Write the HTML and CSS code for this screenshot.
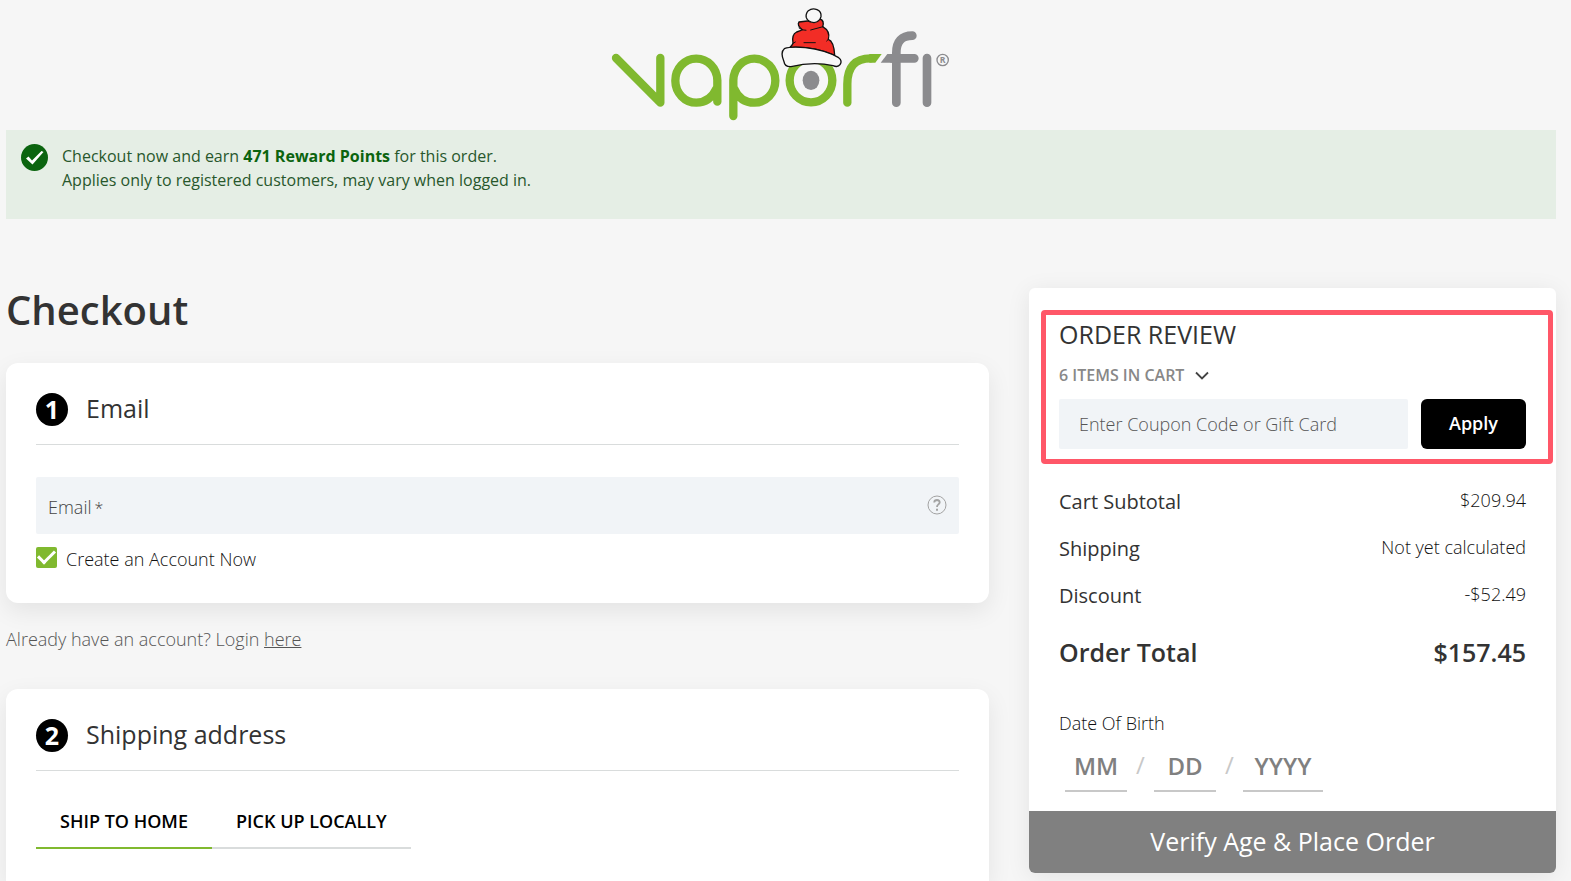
FILE: index.html
```html
<!DOCTYPE html>
<html lang="en">
<head>
<meta charset="utf-8">
<title>Checkout</title>
<meta name="viewport" content="width=device-width, initial-scale=1">
<link rel="stylesheet" href="styles.css">
</head>
<body>
<header class="site-header">
  <a href="#" class="logo" aria-label="VaporFi">
    <svg width="360" height="130" viewBox="0 0 1080 390" fill="none" stroke-linecap="round" stroke-linejoin="round">
      <g stroke="#80b92f" stroke-width="25">
        <path d="M48 174 181 308V174"/>
        <path d="M352 305V241A63 66 0 1 0 289 308Q330 308 350 265"/>
        <path d="M400 348V241A63 66 0 1 1 463 308Q420 308 402 265"/>
        <ellipse cx="633" cy="241" rx="64" ry="66"/>
        <path d="M742 308V252Q742 175 812 175"/>
      </g>
      <path fill="#80b92f" d="M808 162H845L826 188H808Z"/>
      <ellipse cx="633" cy="241" rx="25" ry="29" fill="#8b8b8e"/>
      <g stroke="#8b8b8e" stroke-width="26">
        <path d="M889 308V158Q889 107 937 107"/>
        <path d="M876 175H943M981 174V308"/>
      </g>
      <path fill="#8b8b8e" d="M862 162H890V188H842Z"/>
      <ellipse cx="1028" cy="180" rx="17" ry="17" stroke="#8b8b8e" stroke-width="4"/>
      <text x="1028" y="189" text-anchor="middle" class="logo-mark">R</text>
      <g stroke="#111" stroke-width="4">
        <path fill="#f22d26" d="M570 142Q576 136 579 130Q574 104 590 96Q600 93 607 89Q590 76 597 66L622 63Q640 70 660 57Q674 62 668 80Q692 94 685 118Q702 124 704 166Q640 138 570 142Z"/>
        <path d="M597 84Q608 92 618 91M632 90 669 80M612 128H646M685 118 680 123M579 130 586 126" stroke-width="3"/>
        <path fill="#f7f7f7" d="M553 146Q572 139 616 143Q676 150 716 173Q728 182 720 194Q714 203 699 197Q640 183 573 200Q554 201 552 185Q540 157 553 146Z"/>
        <path fill="#f7f7f7" d="M625 32Q637 23 651 29Q665 35 663 50Q659 66 642 68Q623 66 619 53Q616 42 625 32Z"/>
      </g>
    </svg>
  </a>
</header>

<section class="notice" role="status">
  <svg class="notice-icon" viewBox="0 0 27 27" width="27" height="27"><circle cx="13.5" cy="13.5" r="13.5" fill="#0b640f"/><path d="M5 14.500 7.500 12.500 11 16.500 20.500 7 22.500 8 11.500 20.500Z" fill="#fff"/></svg>
  <p class="notice-text">Checkout now and earn <strong>471 Reward Points</strong> for this order.<br>Applies only to registered customers, may vary when logged in.</p>
</section>

<main class="checkout">
  <div class="steps">
    <h1 class="page-title">Checkout</h1>
    <section class="card">
      <h2 class="step-title"><span class="step-number">1</span>Email</h2>
      <div class="field">
        <label for="email" class="field-label">Email<span class="required">*</span></label>
        <input id="email" type="email" class="field-input">
        <button type="button" class="help" aria-label="Help">
          <svg viewBox="0 0 20 20" width="20" height="20" fill="none" stroke="#a3a3a3"><circle cx="10" cy="10" r="9"/><path d="M7.200 7.500Q7.400 5 10 5Q12.700 5.100 12.700 7.400Q12.600 8.700 11.200 9.600Q10 10.500 10 12" stroke-width="1.800"/><path d="M10 13.700V15.700" stroke-width="2"/></svg>
        </button>
      </div>
      <div class="check-row">
        <input type="checkbox" id="create" class="check" checked>
        <label for="create">Create an Account Now</label>
      </div>
    </section>
    <p class="login">Already have an account? Login <a href="#">here</a></p>
    <section class="card card-shipping">
      <h2 class="step-title"><span class="step-number">2</span>Shipping address</h2>
      <div class="tabs" role="tablist">
        <button type="button" role="tab" aria-selected="true" class="tab tab-active">SHIP TO HOME</button>
        <button type="button" role="tab" aria-selected="false" class="tab">PICK UP LOCALLY</button>
      </div>
    </section>
  </div>

  <aside class="summary">
    <div class="highlight">
      <h2 class="summary-title">ORDER REVIEW</h2>
      <button type="button" class="cart-toggle">6 ITEMS IN CART
        <svg viewBox="0 0 14 9" width="14" height="9" fill="none" stroke="#444" stroke-width="1.800"><path d="M1 1.500 7 7.500 13 1.500"/></svg>
      </button>
      <form class="coupon">
        <input type="text" class="coupon-input" aria-label="Coupon code or gift card" placeholder="Enter Coupon Code or Gift Card">
        <button type="button" class="apply">Apply</button>
      </form>
    </div>
    <dl class="totals">
      <div class="row"><dt>Cart Subtotal</dt><dd>$209.94</dd></div>
      <div class="row"><dt>Shipping</dt><dd>Not yet calculated</dd></div>
      <div class="row"><dt>Discount</dt><dd>-$52.49</dd></div>
      <div class="row row-total"><dt>Order Total</dt><dd>$157.45</dd></div>
    </dl>
    <fieldset class="dob">
      <legend>Date Of Birth</legend>
      <div class="dob-fields">
        <input type="text" class="dob-input" aria-label="Month" placeholder="MM"><span class="slash">/</span>
        <input type="text" class="dob-input" aria-label="Day" placeholder="DD"><span class="slash">/</span>
        <input type="text" class="dob-input dob-year" aria-label="Year" placeholder="YYYY">
      </div>
    </fieldset>
    <button type="submit" class="place-order">Verify Age &amp; Place Order</button>
  </aside>
</main>
</body>
</html>
```
FILE: styles.css
```css
* { box-sizing: border-box; }

body {
  margin: 0;
  padding: 0 15px 0 6px;
  min-height: 100vh;
  background: #f6f6f6;
  color: #333;
  font-family: "Open Sans", "Noto Sans", sans-serif;
  font-size: 18px;
  line-height: 24px;
}

h1, h2, p, dl, dd, fieldset { margin: 0; padding: 0; border: 0; }
button, input { font: inherit; color: inherit; border: 0; margin: 0; padding: 0; background: none; }
button { cursor: pointer; }
svg { display: block; }

.site-header { display: flex; justify-content: center; padding-right: 2px; }
.logo-mark { fill: #8b8b8e; font-size: 26px; font-weight: 700; }

.notice {
  display: flex;
  gap: 14px;
  padding: 14px 15px;
  min-height: 89px;
  background: #e5eee5;
  font-size: 16px;
}
.notice-text { color: #28572c; }
.notice-text strong { color: #0b640f; }

.checkout {
  display: grid;
  grid-template-columns: 983fr 527fr;
  gap: 40px;
  align-items: start;
  padding-top: 69px;
}

.page-title { font-size: 40px; line-height: 44px; font-weight: 600; margin-bottom: 31px; }

.card {
  padding: 30px 30px 32px;
  border-radius: 12px;
  background: #fff;
  box-shadow: 0 8px 24px rgba(0, 0, 0, 0.08);
}

.step-title {
  display: flex;
  align-items: flex-start;
  gap: 18px;
  padding-bottom: 18px;
  margin-bottom: 32px;
  border-bottom: 1px solid #d9dcdc;
  font-size: 25px;
  line-height: 31px;
  font-weight: 500;
}
.step-number {
  width: 32px;
  height: 33px;
  border-radius: 50%;
  background: #000;
  color: #fff;
  font-weight: 700;
  line-height: 32px;
  text-align: center;
}

.field { display: grid; align-items: center; background: #f1f4f7; border-radius: 2px; height: 57px; }
.field-label, .field-input, .help { grid-area: 1 / 1; }
.field-label { padding: 4px 0 0 12px; color: #444; font-weight: 300; }
.required { padding-left: 3px; font-size: 16px; }
.field-input { width: 100%; height: 100%; }
.help { justify-self: end; margin: 0 12px 2px 0; }

.check-row { display: flex; align-items: flex-start; gap: 9px; margin-top: 13px; color: #111; font-weight: 300; }
.check {
  appearance: none;
  width: 21px;
  height: 21px;
  border-radius: 2px;
  background: #80b92f;
  display: grid;
  place-items: center;
}
.check:checked::before {
  content: "";
  width: 14px;
  height: 7px;
  margin-bottom: 5px;
  border: solid #fff;
  border-width: 0 0 3px 3px;
  rotate: -45deg;
}

.login { padding: 24px 0 38px; color: #555; font-weight: 300; }
.login a { color: inherit; }

.card-shipping { border-radius: 12px 12px 0 0; }
.tabs { display: flex; }
.tab {
  height: 46px;
  padding: 0 24px 8px;
  border-bottom: 2px solid #d9dcdc;
  color: #000;
  font-weight: 600;
}
.tab-active { border-color: #80b92f; }

.summary {
  padding-top: 22px;
  border-radius: 6px;
  background: #fff;
  box-shadow: 0 4px 24px rgba(0, 0, 0, 0.08);
  overflow: hidden;
}
.highlight {
  margin: 0 3px 0 12px;
  padding: 4px 22px 10px 13px;
  border: 5px solid #ff5768;
  border-radius: 4px;
}
.summary-title { font-size: 25px; line-height: 30px; font-weight: 500; }
.cart-toggle {
  display: flex;
  align-items: center;
  gap: 11px;
  margin: 14px 0 12px;
  color: #888;
  font-size: 16px;
  font-weight: 600;
}
.coupon { display: flex; gap: 13px; }
.coupon-input { flex: 1; min-width: 0; height: 50px; padding: 0 20px; background: #f1f4f7; border-radius: 2px; font-weight: 300; }
.coupon-input::placeholder { color: #555; opacity: 1; }
.apply { width: 105px; height: 50px; padding-bottom: 2px; border-radius: 6px; background: #000; color: #fff; font-weight: 600; }

.totals { padding: 14px 30px 0; }
.row { display: flex; justify-content: space-between; align-items: center; height: 47px; }
.row dt { font-size: 20px; }
.row dd { font-weight: 300; padding-bottom: 4px; color: #111; }
.row-total { height: 66px; }
.row-total dt, .row-total dd { font-size: 25px; font-weight: 600; padding: 0; color: #333; }

.dob { padding: 26px 30px 19px; }
.dob legend { padding: 0; float: left; width: 100%; color: #111; font-weight: 300; }
.dob-fields { clear: both; display: flex; padding: 6px 6px 0; }
.dob-input {
  width: 62px;
  height: 51px;
  border-bottom: 2px solid #c8c8c8;
  font-size: 24px;
  font-weight: 600;
  text-align: center;
}
.dob-input::placeholder { color: #808080; opacity: 1; }
.dob-year { width: 80px; }
.slash { width: 27px; line-height: 48px; text-align: center; font-size: 24px; color: #c8c8c8; }

.place-order { display: block; width: 100%; height: 62px; padding-bottom: 2px; background: #808080; color: #fff; font-size: 25px; }
```
